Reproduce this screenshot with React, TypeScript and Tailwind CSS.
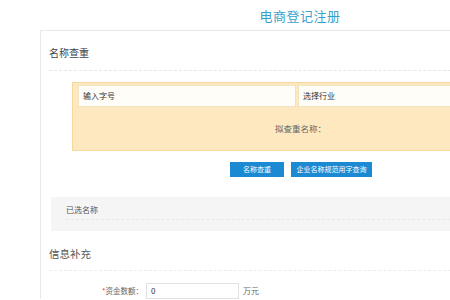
const App = () => {
  return (
    <div
      className="w-full h-[300px] overflow-hidden bg-white"
      style={{ fontFamily: '"Noto Sans CJK SC", "Noto Sans", sans-serif' }}
    >
      {/* Title */}
      <div className="w-[600px] h-[30px] flex justify-center pt-[6px]">
        <h1 className="text-[13px] leading-[20px] text-[#3a9fca] tracking-[0.5px]">电商登记注册</h1>
      </div>

      {/* Card */}
      <div className="ml-[40px] w-[600px] border-l border-t border-[#e8e8e8] pl-[8px]">
        {/* Section: 名称查重 */}
        <div className="w-[592px] pt-[15px] pb-[10px] border-b border-dashed border-[#e6e6e6]">
          <p className="text-[10px] leading-[14px] text-[#444]">名称查重</p>
        </div>

        <div className="ml-[23px] mt-[11px] w-[560px] h-[69px] bg-[#fde8bf] border border-[#f6d89c] px-[5px] pt-[2px] flex flex-col">
          <div className="flex h-[22px]">
            <div className="w-[218px] bg-[#fffdf7] border border-[#f3e3c0] pl-[4px] flex items-center text-[8px] text-[#333]">
              输入字号
            </div>
            <div className="w-[300px] ml-[2px] bg-[#fffdf7] border border-[#f3e3c0] pl-[4px] flex items-center text-[8px] text-[#333]">
              选择行业
            </div>
          </div>
          <div className="pl-[197px] pt-[15px] text-[8.5px] leading-[12px] text-[#666]">拟查重名称：</div>
        </div>

        {/* Buttons */}
        <div className="flex gap-[7px] pl-[181px] mt-[11px]">
          <button className="w-[54px] h-[15px] bg-[#1b8ad3] text-white text-[7px] leading-[15px]">名称查重</button>
          <button className="w-[81px] h-[15px] bg-[#1b8ad3] text-white text-[7px] leading-[15px]">企业名称规范用字查询</button>
        </div>

        {/* 已选名称 */}
        <div className="mt-[20px] ml-[2px] w-[580px] h-[34px] bg-[#f5f5f5] pl-[15px] pt-[7px]">
          <div className="text-[8px] leading-[12px] text-[#555] pb-[3px] border-b border-dashed border-[#e8e8e8] mr-[10px]">已选名称</div>
        </div>

        {/* 信息补充 */}
        <div className="w-[592px] pt-[15px] pb-[9px] border-b border-dashed border-[#ececec]">
          <p className="text-[10.5px] leading-[15px] text-[#555]">信息补充</p>
        </div>

        <div className="flex items-center mt-[12px] h-[16px]">
          <label className="w-[94px] text-right text-[7.5px] text-[#666]">
            <span className="text-[#e33]">*</span>资金数额：
          </label>
          <div className="ml-[3px] w-[93px] h-[16px] border border-[#e2e2e2] pl-[4px] flex items-center text-[8px] text-[#333]">0</div>
          <span className="ml-[4px] text-[8px] text-[#666]">万元</span>
        </div>
      </div>
    </div>
  );
};

export default App;
